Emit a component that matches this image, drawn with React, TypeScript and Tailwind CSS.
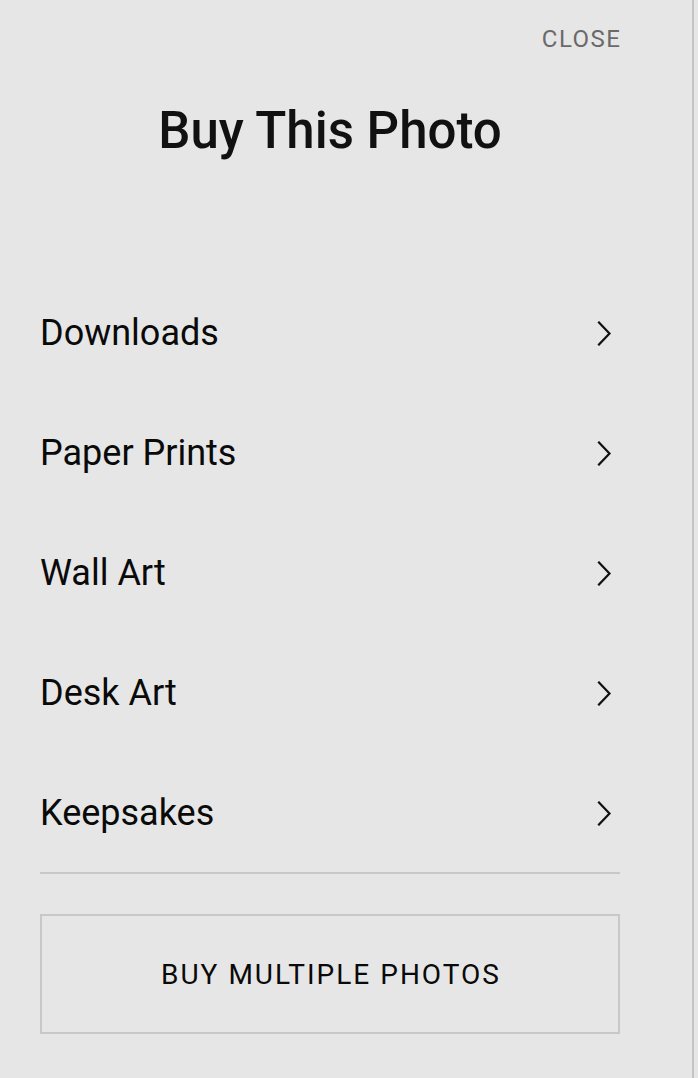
import React from "react";

const items = ["Downloads", "Paper Prints", "Wall Art", "Desk Art", "Keepsakes"];

function Chevron() {
  return (
    <svg width="15" height="25" viewBox="0 0 15 25" fill="none" className="shrink-0">
      <path d="M2 1.5 L12.5 12.5 L2 23.5" stroke="#111" strokeWidth="2.2" strokeLinecap="square" strokeLinejoin="miter" />
    </svg>
  );
}

export default function App() {
  return (
    <div
      className="w-[698px] h-[1078px] bg-[#e6e6e6] flex overflow-hidden"
      style={{ fontFamily: "Roboto, 'Liberation Sans', sans-serif" }}
    >
      <div className="w-[692px] h-full pl-10 pr-[72px] pt-[27px] flex flex-col">
        <div className="flex justify-end">
          <span className="text-[24px] leading-none tracking-[1.5px] text-[#6a6a6a] mr-[-1.5px]">CLOSE</span>
        </div>
        <h1 className="mt-[54px] text-[51px] leading-none font-medium text-[#111] text-center">Buy This Photo</h1>
        <div className="mt-[116px] flex flex-col">
          {items.map((t) => (
            <div key={t} className="h-[120px] flex items-center justify-between pt-[2px]">
              <span className="text-[36px] leading-none text-[#0a0a0a]">{t}</span>
              <div className="mr-[8px]"><Chevron /></div>
            </div>
          ))}
        </div>
        <div className="h-[2px] bg-[#c8c8c8]" />
        <div className="mt-[40px] h-[120px] border-2 border-[#c8c8c8] flex items-center justify-center pt-[2px]">
          <span className="text-[28px] leading-none tracking-[2px] text-[#0a0a0a] mr-[-2px]">BUY MULTIPLE PHOTOS</span>
        </div>
      </div>
      <div className="w-[2px] h-full bg-[#c4c4c4]" />
      <div className="flex-1 h-full" />
    </div>
  );
}
